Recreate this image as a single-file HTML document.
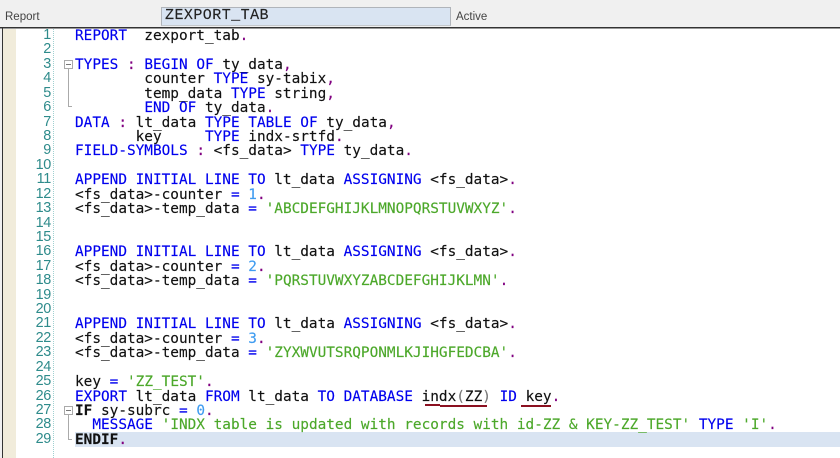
<!DOCTYPE html>
<html><head><meta charset="utf-8"><style>
html,body{margin:0;padding:0;background:#fff;}
#p{position:relative;width:840px;height:458px;overflow:hidden;background:#fff;font-family:"DejaVu Sans Mono","Liberation Mono",monospace;}
#p div{position:absolute;}
.l{left:75px;margin-top:1px;height:14px;line-height:14px;font-size:14.4px;white-space:pre;color:#111;-webkit-text-stroke:.15px;}
.n{left:20px;width:31px;text-align:right;height:14px;line-height:14px;font-size:14.4px;letter-spacing:-.3px;color:#2e8b8b;font-family:"Liberation Sans",sans-serif;}
i{font-style:normal;}
.k{color:#0000ee;}.s{color:#4ca82a;}.p{color:#800080;}.d{color:#3f9cf0;}.g{color:#777;}
b{font-weight:bold;color:#111;}
.u{background:#8b1020;height:2px;}
.lab{font:11.5px "Liberation Sans",sans-serif;color:#444;top:11px;}
</style></head><body><div id="p">
<div style="left:0;top:0;width:840px;height:27px;background:#f0f0f0"></div>
<div style="left:0;top:27px;width:2px;height:431px;background:#f0f0f0"></div>
<div style="left:0;top:27px;width:840px;height:1px;background:#333"></div>
<div style="left:0;top:28px;width:840px;height:1px;background:#999"></div>
<div class="lab" style="left:5px">Report</div>
<div style="left:161px;top:7px;width:288px;height:17px;background:#d9e4f2;border:1px solid #b0b4ba;border-bottom-color:#c4c8cc"></div>
<div style="left:165px;top:8px;font:15px/16px 'Liberation Mono',monospace;letter-spacing:.45px;color:#222;-webkit-text-stroke:.15px">ZEXPORT_TAB</div>
<div class="lab" style="left:456px">Active</div>
<div style="left:2px;top:28px;width:1px;height:430px;background:#333"></div>
<div style="left:3px;top:29px;width:13px;height:429px;background:#f1ecdb"></div>
<div style="left:53px;top:29px;width:0;height:429px;border-left:1px dotted #9fd0d0"></div>
<div style="left:75px;top:432px;width:765px;height:14.5px;background:#d9e4f2"></div>

<div class="n" style="top:28px">1</div><div class="n" style="top:42px">2</div><div class="n" style="top:57px">3</div><div class="n" style="top:71px">4</div><div class="n" style="top:86px">5</div><div class="n" style="top:100px">6</div><div class="n" style="top:115px">7</div><div class="n" style="top:129px">8</div><div class="n" style="top:143px">9</div><div class="n" style="top:158px">10</div><div class="n" style="top:172px">11</div><div class="n" style="top:187px">12</div><div class="n" style="top:201px">13</div><div class="n" style="top:216px">14</div><div class="n" style="top:230px">15</div><div class="n" style="top:244px">16</div><div class="n" style="top:259px">17</div><div class="n" style="top:273px">18</div><div class="n" style="top:288px">19</div><div class="n" style="top:302px">20</div><div class="n" style="top:316px">21</div><div class="n" style="top:331px">22</div><div class="n" style="top:345px">23</div><div class="n" style="top:360px">24</div><div class="n" style="top:374px">25</div><div class="n" style="top:389px">26</div><div class="n" style="top:403px">27</div><div class="n" style="top:417px">28</div><div class="n" style="top:432px">29</div>

<div class="l" style="top:28px"><i class="k">REPORT</i>  zexport_tab<i class="p">.</i></div>
<div class="l" style="top:57px"><i class="k">TYPES</i> <i class="p">:</i> <i class="k">BEGIN OF</i> ty_data<i class="p">,</i></div>
<div class="l" style="top:71px">        counter <i class="k">TYPE</i> sy-tabix<i class="p">,</i></div>
<div class="l" style="top:86px">        temp_data <i class="k">TYPE</i> string<i class="p">,</i></div>
<div class="l" style="top:100px">        <i class="k">END OF</i> ty_data<i class="p">.</i></div>
<div class="l" style="top:115px"><i class="k">DATA</i> <i class="p">:</i> lt_data <i class="k">TYPE TABLE OF</i> ty_data<i class="p">,</i></div>
<div class="l" style="top:129px">       key     <i class="k">TYPE</i> indx-srtfd<i class="p">.</i></div>
<div class="l" style="top:143px"><i class="k">FIELD-SYMBOLS</i> <i class="p">:</i> &lt;fs_data&gt; <i class="k">TYPE</i> ty_data<i class="p">.</i></div>
<div class="l" style="top:172px"><i class="k">APPEND INITIAL LINE TO</i> lt_data <i class="k">ASSIGNING</i> &lt;fs_data&gt;<i class="p">.</i></div>
<div class="l" style="top:187px">&lt;fs_data&gt;-counter <i class="k">=</i> <i class="d">1</i><i class="p">.</i></div>
<div class="l" style="top:201px">&lt;fs_data&gt;-temp_data <i class="k">=</i> <i class="s">'ABCDEFGHIJKLMNOPQRSTUVWXYZ'</i><i class="p">.</i></div>
<div class="l" style="top:244px"><i class="k">APPEND INITIAL LINE TO</i> lt_data <i class="k">ASSIGNING</i> &lt;fs_data&gt;<i class="p">.</i></div>
<div class="l" style="top:259px">&lt;fs_data&gt;-counter <i class="k">=</i> <i class="d">2</i><i class="p">.</i></div>
<div class="l" style="top:273px">&lt;fs_data&gt;-temp_data <i class="k">=</i> <i class="s">'PQRSTUVWXYZABCDEFGHIJKLMN'</i><i class="p">.</i></div>
<div class="l" style="top:316px"><i class="k">APPEND INITIAL LINE TO</i> lt_data <i class="k">ASSIGNING</i> &lt;fs_data&gt;<i class="p">.</i></div>
<div class="l" style="top:331px">&lt;fs_data&gt;-counter <i class="k">=</i> <i class="d">3</i><i class="p">.</i></div>
<div class="l" style="top:345px">&lt;fs_data&gt;-temp_data <i class="k">=</i> <i class="s">'ZYXWVUTSRQPONMLKJIHGFEDCBA'</i><i class="p">.</i></div>
<div class="l" style="top:374px">key <i class="k">=</i> <i class="s">'ZZ_TEST'</i><i class="p">.</i></div>
<div class="l" style="top:389px"><i class="k">EXPORT</i> lt_data <i class="k">FROM</i> lt_data <i class="k">TO DATABASE</i> indx<i class="g">(</i>ZZ<i class="g">)</i> <i class="k">ID</i> key<i class="p">.</i></div>
<div class="l" style="top:403px"><b>IF</b> sy-subrc <i class="k">=</i> <i class="d">0</i><i class="p">.</i></div>
<div class="l" style="top:417px">  <i class="k">MESSAGE</i> <i class="s">'INDX table is updated with records with id-ZZ &amp; KEY-ZZ_TEST'</i> <i class="k">TYPE</i> <i class="s">'I'</i><i class="p">.</i></div>
<div class="l" style="top:432px"><b>ENDIF</b><i class="p">.</i></div>

<div class="u" style="left:425px;top:404px;width:15px"></div>
<div class="u" style="left:440px;top:405px;width:47px"></div>
<div class="u" style="left:521px;top:405px;width:30px"></div>

<svg style="position:absolute;left:60px;top:55px" width="16" height="60"><rect x="4.5" y="5.5" width="8" height="8" fill="#fff" stroke="#aaa"/><path d="M6 9.5h5" stroke="#777"/><path d="M8.5 14v37.5H12" fill="none" stroke="#aaa"/></svg>
<svg style="position:absolute;left:60px;top:400px" width="16" height="45"><rect x="4.5" y="6.5" width="8" height="8" fill="#fff" stroke="#aaa"/><path d="M6 10.5h5" stroke="#777"/><path d="M8.5 15v24.5H12" fill="none" stroke="#aaa"/></svg>
</div></body></html>
